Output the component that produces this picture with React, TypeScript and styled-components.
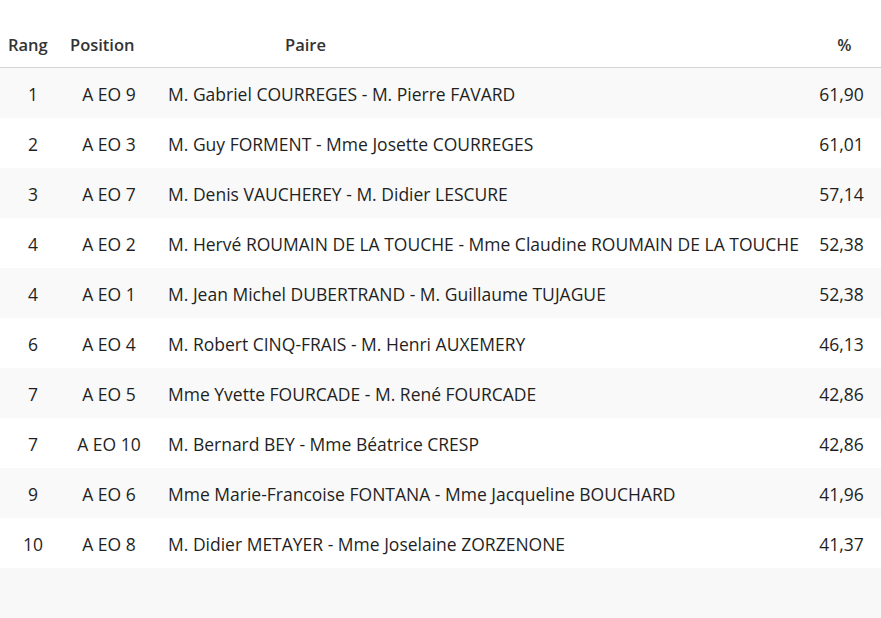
import styled, { createGlobalStyle } from 'styled-components';

// ─── Data ─────────────────────────────────────────────────────────────────────

type Row = { rang: string; position: string; paire: string; pct: string };

const rows: Row[] = [
  { rang: '1', position: 'A EO 9', paire: 'M. Gabriel COURREGES - M. Pierre FAVARD', pct: '61,90' },
  { rang: '2', position: 'A EO 3', paire: 'M. Guy FORMENT - Mme Josette COURREGES', pct: '61,01' },
  { rang: '3', position: 'A EO 7', paire: 'M. Denis VAUCHEREY - M. Didier LESCURE', pct: '57,14' },
  { rang: '4', position: 'A EO 2', paire: 'M. Hervé ROUMAIN DE LA TOUCHE - Mme Claudine ROUMAIN DE LA TOUCHE', pct: '52,38' },
  { rang: '4', position: 'A EO 1', paire: 'M. Jean Michel DUBERTRAND - M. Guillaume TUJAGUE', pct: '52,38' },
  { rang: '6', position: 'A EO 4', paire: 'M. Robert CINQ-FRAIS - M. Henri AUXEMERY', pct: '46,13' },
  { rang: '7', position: 'A EO 5', paire: 'Mme Yvette FOURCADE - M. René FOURCADE', pct: '42,86' },
  { rang: '7', position: 'A EO 10', paire: 'M. Bernard BEY - Mme Béatrice CRESP', pct: '42,86' },
  { rang: '9', position: 'A EO 6', paire: 'Mme Marie-Francoise FONTANA - Mme Jacqueline BOUCHARD', pct: '41,96' },
  { rang: '10', position: 'A EO 8', paire: 'M. Didier METAYER - Mme Joselaine ZORZENONE', pct: '41,37' },
];

// ─── Styles ───────────────────────────────────────────────────────────────────

const GlobalStyle = createGlobalStyle`
  html, body {
    margin: 0;
    padding: 0;
    background: #ffffff;
  }
  body {
    font-family: 'Open Sans', 'Liberation Sans', sans-serif;
    color: #222222;
  }
`;

const Page = styled.div`
  width: 881px;
  min-height: 618px;
  display: flex;
  flex-direction: column;
`;

const COLS = '66px 86px 1fr 79px';

const HeadRow = styled.div`
  display: grid;
  grid-template-columns: ${COLS};
  height: 68px;
  align-items: end;
  border-bottom: 1px solid #d4d4d4;
  box-sizing: border-box;
`;

const HeadCell = styled.div<{ $pad?: number; $align?: string }>`
  font-size: 16.5px;
  font-weight: 600;
  line-height: 22px;
  padding: 0 0 11px ${({ $pad }) => $pad ?? 0}px;
  text-align: ${({ $align }) => $align ?? 'left'};
  color: #333;
`;

const BodyRow = styled.div<{ $striped: boolean }>`
  display: grid;
  grid-template-columns: ${COLS};
  height: 50px;
  align-items: center;
  background: ${({ $striped }) => ($striped ? '#f9f9f9' : '#ffffff')};
`;

const Cell = styled.div<{ $align?: string; $pad?: number }>`
  font-size: 17.5px;
  line-height: 22px;
  padding-top: 1px;
  text-align: ${({ $align }) => $align ?? 'center'};
  padding-left: ${({ $pad }) => $pad ?? 0}px;
  white-space: nowrap;
  color: #1f1f1f;
`;

const Filler = styled.div`
  flex: 1;
  background: #f8f8f8;
`;

// ─── Component ────────────────────────────────────────────────────────────────

export default function App() {
  return (
    <Page>
      <GlobalStyle />
      <HeadRow>
        <HeadCell $pad={8}>Rang</HeadCell>
        <HeadCell $pad={4}>Position</HeadCell>
        <HeadCell $pad={133}>Paire</HeadCell>
        <HeadCell $align="center" $pad={6}>%</HeadCell>
      </HeadRow>
      {rows.map((r, i) => (
        <BodyRow key={i} $striped={i % 2 === 0}>
          <Cell>{r.rang}</Cell>
          <Cell>{r.position}</Cell>
          <Cell $align="left" $pad={16}>{r.paire}</Cell>
          <Cell>{r.pct}</Cell>
        </BodyRow>
      ))}
      <Filler />
    </Page>
  );
}
